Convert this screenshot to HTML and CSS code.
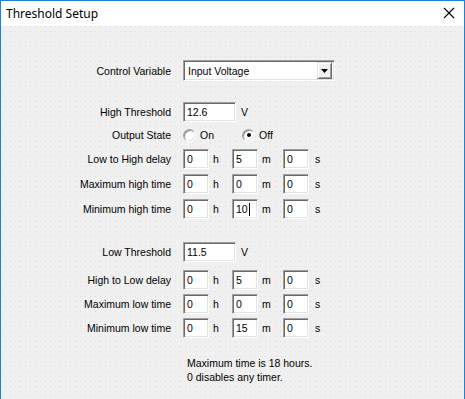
FILE: index.html
```html
<!DOCTYPE html>
<html lang="en">
<head>
  <meta charset="UTF-8">
  <meta name="viewport" content="width=device-width, initial-scale=1.0">
  <title>Threshold Setup</title>
  <link rel="stylesheet" href="styles.css">
</head>
<body>
  <div class="window">
    <div class="titlebar">
      <span class="title">Threshold Setup</span>
      <svg class="close" width="12" height="12" viewBox="0 0 12 12">
        <path d="M1 1 L11 11 M11 1 L1 11" stroke="#000" stroke-width="1.1" fill="none"/>
      </svg>
    </div>

    <div class="client">
      <!-- Control variable -->
      <div class="row row-control">
        <span class="lbl">Control Variable</span>
        <div class="combo">
          <span class="combo-text">Input Voltage</span>
          <span class="combo-btn">
            <svg width="7" height="4" viewBox="0 0 7 4"><path d="M0 0 H7 L3.5 4 Z" fill="#000"/></svg>
          </span>
        </div>
      </div>

      <!-- High side -->
      <div class="row row-high">
        <span class="lbl">High Threshold</span>
        <span class="field wide">12.6</span>
        <span class="unit-v">V</span>
      </div>
      <div class="row row-radio">
        <span class="lbl">Output State</span>
        <span class="radio-item"><span class="radio"></span>On</span>
        <span class="radio-item"><span class="radio checked"></span>Off</span>
      </div>
      <div class="row row-time">
        <span class="lbl">Low to High delay</span>
        <span class="field">0</span><span class="unit u-h">h</span>
        <span class="field">5</span><span class="unit u-m">m</span>
        <span class="field">0</span><span class="unit u-s">s</span>
      </div>
      <div class="row row-time">
        <span class="lbl">Maximum high time</span>
        <span class="field">0</span><span class="unit u-h">h</span>
        <span class="field">0</span><span class="unit u-m">m</span>
        <span class="field">0</span><span class="unit u-s">s</span>
      </div>
      <div class="row row-time">
        <span class="lbl">Minimum high time</span>
        <span class="field">0</span><span class="unit u-h">h</span>
        <span class="field">10<span class="caret"></span></span><span class="unit u-m">m</span>
        <span class="field">0</span><span class="unit u-s">s</span>
      </div>

      <!-- Low side -->
      <div class="row row-low">
        <span class="lbl">Low Threshold</span>
        <span class="field wide">11.5</span>
        <span class="unit-v">V</span>
      </div>
      <div class="row row-time low-time first-low">
        <span class="lbl">High to Low delay</span>
        <span class="field">0</span><span class="unit u-h">h</span>
        <span class="field">5</span><span class="unit u-m">m</span>
        <span class="field">0</span><span class="unit u-s">s</span>
      </div>
      <div class="row row-time low-time">
        <span class="lbl">Maximum low time</span>
        <span class="field">0</span><span class="unit u-h">h</span>
        <span class="field">0</span><span class="unit u-m">m</span>
        <span class="field">0</span><span class="unit u-s">s</span>
      </div>
      <div class="row row-time low-time">
        <span class="lbl">Minimum low time</span>
        <span class="field">0</span><span class="unit u-h">h</span>
        <span class="field">15</span><span class="unit u-m">m</span>
        <span class="field">0</span><span class="unit u-s">s</span>
      </div>

      <p class="note">Maximum time is 18 hours.<br>0 disables any timer.</p>
    </div>
  </div>
</body>
</html>
```

FILE: styles.css
```css
html, body {
  margin: 0;
  padding: 0;
}

body {
  width: 465px;
  height: 399px;
  overflow: hidden;
  font-family: "Liberation Sans", Arial, sans-serif;
  font-size: 10.5px;
  color: #000;
}

.window {
  box-sizing: border-box;
  width: 465px;
  height: 399px;
  border: 1px solid #1883d7;
  border-bottom: none;
  display: flex;
  flex-direction: column;
  overflow: hidden;
}

.titlebar {
  flex-shrink: 0;
  height: 25px;
  background: #fff;
  display: flex;
  align-items: center;
  justify-content: space-between;
  padding: 0 9px 0 5px;
}

.title {
  font-family: "Noto Sans", sans-serif;
  font-size: 12px;
  margin-top: -1px;
}

.close {
  margin-top: -2px;
}

.client {
  flex: 1;
  background-color: #f0f0f0;
  background-image: radial-gradient(circle, #dedede 0.7px, transparent 0.9px);
  background-size: 5px 5px;
  background-position: 2px 3px;
  padding-top: 34px;
}

.row {
  display: flex;
  align-items: center;
  height: 20px;
}

.lbl {
  width: 170px;
  text-align: right;
  margin-right: 12px;
  white-space: nowrap;
}

.row-high { margin-top: 21px; }
.row-radio { margin-top: 3px; }
.row-time { margin-top: 5px; }
.row-radio + .row-time { margin-top: 4px; }
.row-low { margin-top: 23px; }
.row-time.low-time { margin-top: 4px; }
.row-time.first-low { margin-top: 8px; }

/* combo box */
.row-control { height: 21px; }

.combo {
  box-sizing: border-box;
  width: 152px;
  height: 21px;
  background: #fff;
  border: 1px solid;
  border-color: #a0a0a0 #fff #fff #a0a0a0;
  box-shadow: inset 1px 1px 0 #696969, inset -1px -1px 0 #e3e3e3;
  display: flex;
  align-items: center;
  padding: 0 2px 0 4px;
}

.combo-text {
  flex: 1;
}

.combo-btn {
  box-sizing: border-box;
  width: 15px;
  height: 17px;
  background: #f0f0f0;
  border: 1px solid;
  border-color: #e3e3e3 #696969 #696969 #e3e3e3;
  box-shadow: inset 1px 1px 0 #fff, inset -1px -1px 0 #a0a0a0;
  display: flex;
  align-items: center;
  justify-content: center;
}

/* text fields */
.field {
  box-sizing: border-box;
  width: 26px;
  height: 20px;
  background: #fff;
  border: 1px solid;
  border-color: #a0a0a0 #fff #fff #a0a0a0;
  box-shadow: inset 1px 1px 0 #696969, inset -1px -1px 0 #e3e3e3;
  padding-left: 3px;
  display: flex;
  align-items: center;
}

.field.wide {
  width: 53px;
}

.caret {
  display: inline-block;
  width: 1px;
  height: 13px;
  background: #000;
  margin-left: 1px;
}

.unit {
  box-sizing: border-box;
  padding-left: 4px;
}

.u-h { width: 23px; }
.u-m { width: 25px; padding-left: 4px; }
.u-s { padding-left: 6px; }

.unit-v {
  margin-left: 5px;
}

/* radio buttons */
.radio-item {
  display: flex;
  align-items: center;
  width: 59px;
}

.radio {
  box-sizing: border-box;
  width: 13px;
  height: 13px;
  border-radius: 50%;
  background: #fff;
  border: 1px solid;
  border-color: #a0a0a0 #fff #fff #a0a0a0;
  box-shadow: inset 1px 1px 0 #8a8a8a, inset -1px -1px 0 #e3e3e3;
  margin-right: 4px;
  display: flex;
  align-items: center;
  justify-content: center;
}

.radio.checked::after {
  content: "";
  width: 4px;
  height: 4px;
  border-radius: 50%;
  background: #000;
}

.note {
  margin: 18px 0 0 186px;
  line-height: 14px;
}
```
